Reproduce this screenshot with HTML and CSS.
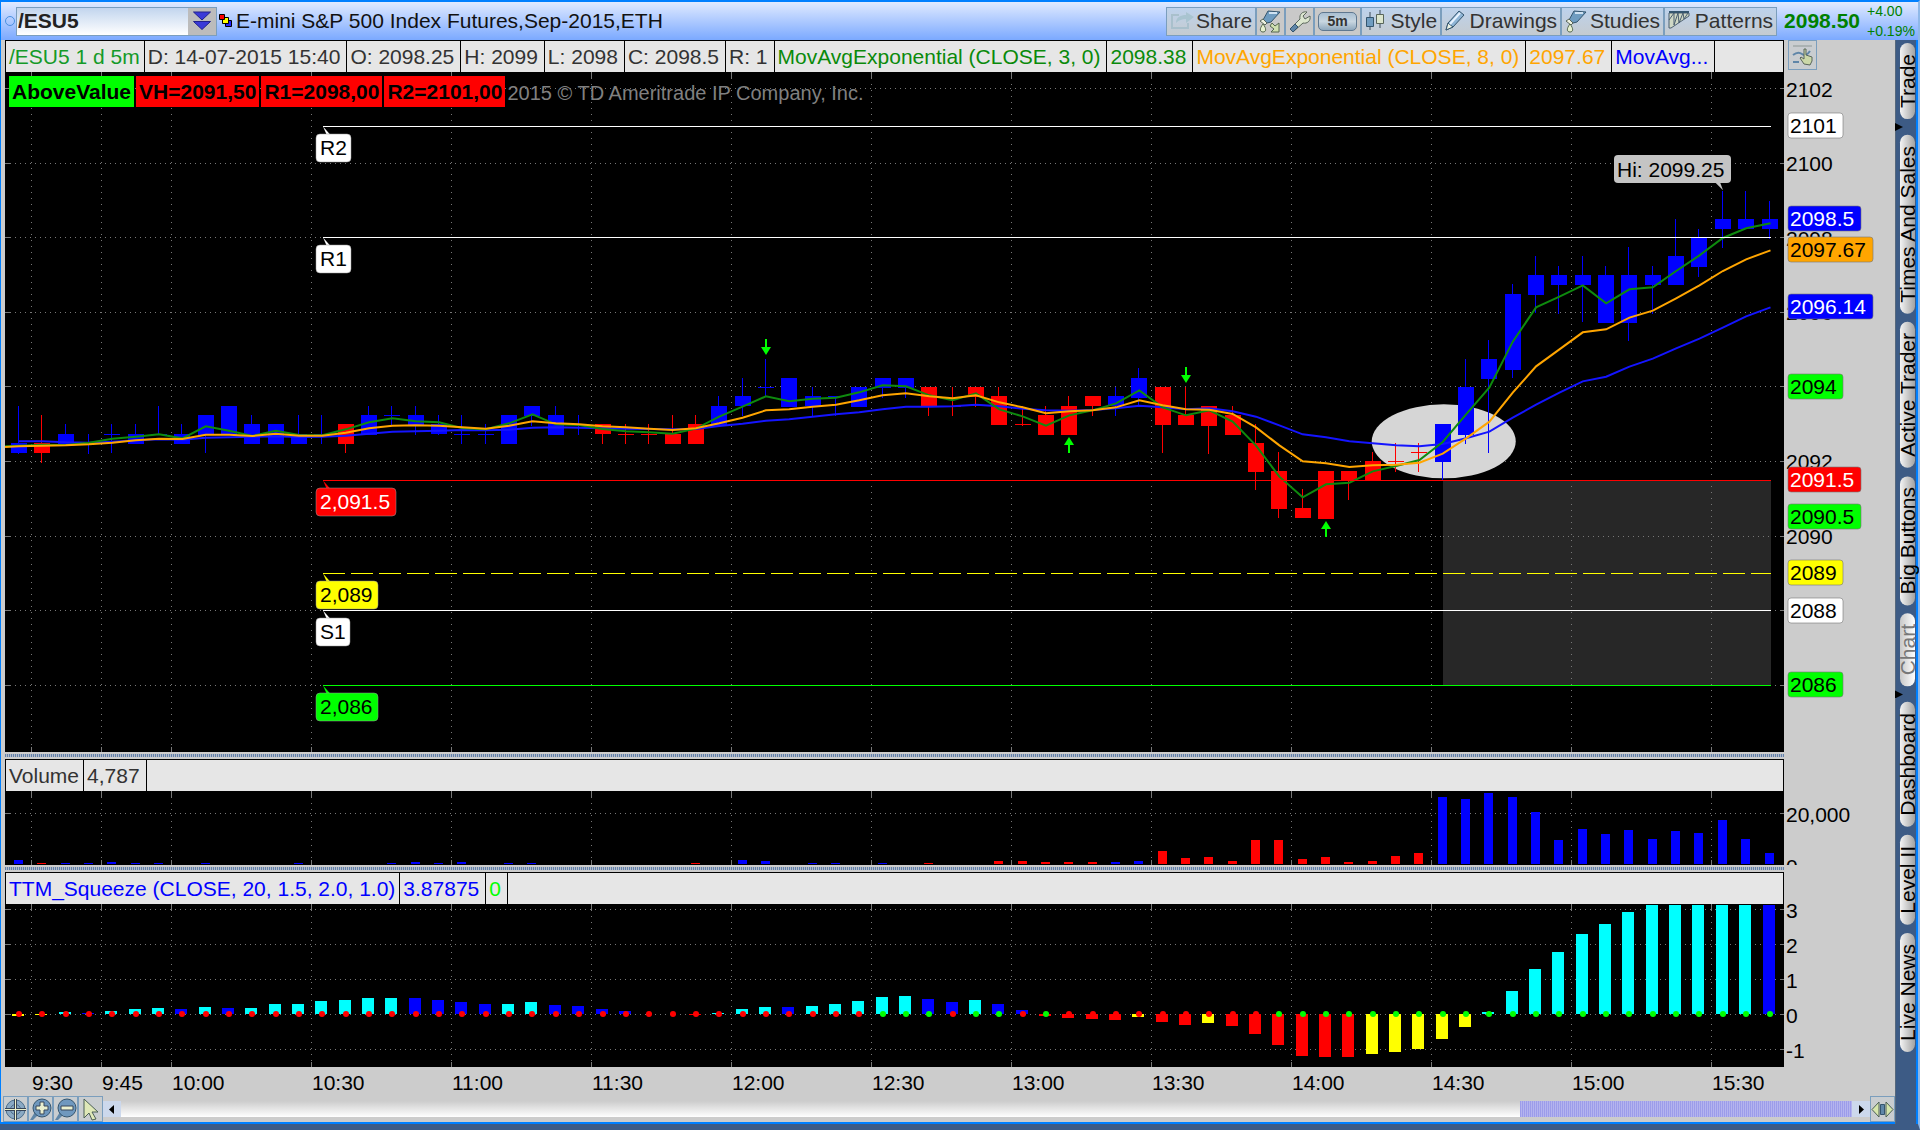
FILE: index.html
```html
<!DOCTYPE html>
<html lang="en">
<head>
<meta charset="utf-8">
<title>/ESU5 Chart</title>
<link rel="stylesheet" href="styles.css">
</head>
<body>
<div class="window">
  <header class="titlebar">
    <span class="link-dot"></span>
    <div class="symbol">
      <input class="symbol-input" type="text" value="/ESU5" aria-label="Symbol">
      <button class="symbol-drop" type="button" aria-label="Choose symbol">
        <svg width="18" height="20" viewBox="0 0 18 20"><path d="M0.500 1h17l-8.500 8zM0.500 10.500h17l-8.500 8z" fill="#3a3ad8" stroke="#22228c"/></svg>
      </button>
    </div>
    <svg class="squares" width="14" height="14" viewBox="0 0 14 14"><g stroke="#000"><path d="M6.500 6.500h6v6h-6z" fill="#22f"/><path d="M3.500 3.500h6v6h-6z" fill="#ff0"/><path d="M0.500 0.500h5v5h-5z" fill="#f00"/></g></svg>
    <h1 class="title">E-mini S&amp;P 500 Index Futures,Sep-2015,ETH</h1>
    <nav class="tools">
      <button class="tool tool-share" type="button"><svg width="25" height="20" viewBox="0 0 25 20"><path d="M9 4H2v13h16v-5" fill="none" stroke="#a9c0cc" stroke-width="2"/><path d="M6 12c0-6 5-8 10-8V1l8 5-8 6V8c-4 0-7 1-10 4z" fill="#a9c4d0"/></svg>Share</button>
      <button class="tool tool-icon" type="button" aria-label="Edit studies"><svg width="25" height="25" viewBox="0 0 25 25"><path d="M10 2l12 1-9 10-4 1-4-3z" fill="#6f9cc0" stroke="#34556e"/><path d="M11 4l8 0" stroke="#cfe2f2" stroke-width="2"/><path d="M5 10l4 4-2 2-5-4z" fill="#eef1e0" stroke="#59665a"/><path d="M5 15c4 5 3 8 0 8s-4-3 0-8z" fill="#e7f0cf" stroke="#54664e"/><path d="M14 14l3 3 4-3v9h-8l3-3-4-3z" fill="#cfe0b0" stroke="#54664e"/></svg></button>
      <button class="tool tool-icon" type="button" aria-label="Settings"><svg width="25" height="25" viewBox="0 0 25 25"><path d="M3 20L13 10c-1-5 3-8 7-7l-4 4 2 3 5-3c1 5-3 8-7 7L6 23z" fill="#dce6cf" stroke="#59665a"/><path d="M3 20l5-5 3 3-5 5z" fill="#5f86a8" stroke="#34556e"/></svg></button>
      <button class="tool tool-period" type="button"><span class="period">5m</span></button>
      <button class="tool tool-style" type="button"><svg width="20" height="22" viewBox="0 0 20 22"><path d="M5 2v18M15 0v18" stroke="#3d4d5a"/><path d="M1.500 7.500h7v9h-7z" fill="#6f9cc0" stroke="#34556e"/><path d="M11.500 4.500h7v9h-7z" fill="#dce6cf" stroke="#59665a"/></svg>Style</button>
      <button class="tool tool-draw" type="button"><svg width="20" height="22" viewBox="0 0 20 22"><path d="M1 20l2-7L14 1l5 4L8 17z" fill="#8fb5d6" stroke="#34556e"/><path d="M1 20l2-7 5 4z" fill="#eef3e4" stroke="#34556e"/><path d="M5 14L15 3" stroke="#e8f3ff" stroke-width="2"/></svg>Drawings</button>
      <button class="tool tool-studies" type="button"><svg width="22" height="25" viewBox="0 0 22 25"><path d="M9 2l12 1-9 10-4 1-4-3z" fill="#6f9cc0" stroke="#34556e"/><path d="M10 4l8 0" stroke="#cfe2f2" stroke-width="2"/><path d="M4 10l4 4-2 2-5-4z" fill="#eef1e0" stroke="#59665a"/><path d="M5 15c4 5 3 8 0 8s-4-3 0-8z" fill="#e7f0cf" stroke="#54664e"/></svg>Studies</button>
      <button class="tool tool-patterns" type="button"><svg width="22" height="22" viewBox="0 0 22 22"><path d="M1 3h20v3L3 18H1z" fill="#cfd8c6" stroke="#4b5f70"/><path d="M1 10l5-7 0 12 4-12 1 10 4-10 1 6 4-6" fill="none" stroke="#4b5f70"/><path d="M1 2h20" stroke="#34556e" stroke-width="2"/></svg>Patterns</button>
    </nav>
    <strong class="last">2098.50</strong>
    <div class="change"><span>+4.00</span><span>+0.19%</span></div>
  </header>

  <div class="middle">
    <main class="charts">
      <section class="panel panel-price">
        <div class="legend">
          <span class="cell green">/ESU5 1 d 5m</span><span class="cell">D: 14-07-2015 15:40</span><span class="cell">O: 2098.25</span><span class="cell">H: 2099</span><span class="cell">L: 2098</span><span class="cell">C: 2098.5</span><span class="cell">R: 1</span><span class="cell ema">MovAvgExponential (CLOSE, 3, 0)</span><span class="cell ema">2098.38</span><span class="cell orange">MovAvgExponential (CLOSE, 8, 0)</span><span class="cell orange">2097.67</span><span class="cell blue">MovAvg...</span>
        </div>
        <button class="pan" type="button" aria-label="Pan axis"><svg width="24" height="24" viewBox="0 0 24 24"><path d="M2 3h19" stroke="#8d9896"/><path d="M2 12q5-4 9-1t8-3M2 19l6 0" stroke="#5f86a8" fill="none" stroke-width="2"/><path d="M13 21l-4-6 1-1 3 2V6h2v6l6 2v4l-2 4z" fill="#cbd8a8" stroke="#59665a"/></svg></button>
        <div class="plot-wrap">
          <svg class="plot" id="price"></svg>
          <div class="badges">
            <span class="badge badge-up">AboveValue</span><span class="badge">VH=2091,50</span><span class="badge">R1=2098,00</span><span class="badge">R2=2101,00</span><span class="copyright">2015 © TD Ameritrade IP Company, Inc.</span>
          </div>
        </div>
      </section>
      <div class="splitter"></div>
      <section class="panel panel-volume">
        <div class="legend"><span class="cell">Volume</span><span class="cell">4,787</span></div>
        <div class="plot-wrap"><svg class="plot" id="volume"></svg></div>
      </section>
      <div class="splitter"></div>
      <section class="panel panel-squeeze">
        <div class="legend"><span class="cell blue">TTM_Squeeze (CLOSE, 20, 1.5, 2.0, 1.0)</span><span class="cell blue">3.87875</span><span class="cell lime">0</span></div>
        <div class="plot-wrap"><svg class="plot" id="squeeze"></svg></div>
      </section>
      <svg class="times" id="times"></svg>
      <footer class="bottom">
        <button class="mini" type="button" aria-label="Crosshair"><svg width="23" height="23" viewBox="0 0 23 23"><circle cx="11.500" cy="11.500" r="9.500" fill="#8aa9c4" stroke="#4d6f8c"/><circle cx="11.500" cy="11.500" r="5" fill="none" stroke="#4d6f8c"/><path d="M11.500 1v21M1 11.500h21" stroke="#38465a" stroke-width="3"/><path d="M11.500 1v21M1 11.500h21" stroke="#eef3cc"/></svg></button>
        <button class="mini" type="button" aria-label="Zoom in"><svg width="23" height="23" viewBox="0 0 23 23"><path d="M1 22l5-8 3 3-5 5z" fill="#5f86a8"/><circle cx="13" cy="10" r="9" fill="#6f98be" stroke="#34556e"/><path d="M11 4h4v4h4v4h-4v4h-4v-4H7V8h4z" fill="#eaf0cf" stroke="#38465a"/></svg></button>
        <button class="mini" type="button" aria-label="Zoom out"><svg width="23" height="23" viewBox="0 0 23 23"><path d="M1 22l5-8 3 3-5 5z" fill="#5f86a8"/><circle cx="13" cy="10" r="9" fill="#6f98be" stroke="#34556e"/><path d="M7 8h12v4H7z" fill="#eaf0cf" stroke="#38465a"/></svg></button>
        <button class="mini" type="button" aria-label="Pointer"><svg width="23" height="23" viewBox="0 0 23 23"><path d="M5 1l14 13h-6l4 7-4 1-3-7-5 5z" fill="#dfe8b8" stroke="#4b5f55"/></svg></button>
        <button class="step" type="button" aria-label="Scroll left"><svg width="6" height="9" viewBox="0 0 6 9"><path d="M5 0v9L0 4.500z"/></svg></button>
        <div class="track"><div class="thumb"></div></div>
        <button class="step" type="button" aria-label="Scroll right"><svg width="6" height="9" viewBox="0 0 6 9"><path d="M1 0v9l5-4.500z"/></svg></button>
        <button class="mini" type="button" aria-label="Fit width"><svg width="23" height="23" viewBox="0 0 23 23"><path d="M8 4v15l-7-7.500zM15 4v15l7-7.500z" fill="#d6e6ac" stroke="#4b5f55"/><path d="M9.500 6.500h4v10h-4z" fill="#5f86a8" stroke="#34556e"/></svg></button>
      </footer>
    </main>
    <aside class="tabs">
      <button class="tab" type="button">Trade</button>
      <i class="marker"></i>
      <button class="tab" type="button">Times And Sales</button>
      <button class="tab" type="button">Active Trader</button>
      <button class="tab" type="button">Big Buttons</button>
      <button class="tab tab-current" type="button">Chart</button>
      <i class="marker"></i>
      <button class="tab" type="button">Dashboard</button>
      <button class="tab" type="button">Level II</button>
      <button class="tab" type="button">Live News</button>
    </aside>
  </div>
</div>
<script src="chart.js"></script>
</body>
</html>
```
FILE: styles.css
```css
* { box-sizing: border-box; }

body {
  margin: 0;
  background: #3d5b85;
  font-family: "Liberation Sans", Arial, sans-serif;
  font-size: 21px;
  line-height: 24px;
  color: #333;
}

button {
  font: inherit;
  color: inherit;
  margin: 0;
  padding: 0;
}

.window {
  display: flex;
  flex-direction: column;
  min-height: 100vh;
  background: #ccc;
  border-top: 2px solid #0080ff;
  border-bottom: 6px solid #3d5b85;
  border-right: 2px solid #8fb8e8;
}

/* Title bar */
.titlebar {
  display: flex;
  align-items: center;
  height: 38px;
  padding: 0 3px 0 4px;
  background: linear-gradient(#e0eaff, #7ba9ff);
  border-left: 1px solid #0080ff;
}

.link-dot {
  width: 10px;
  height: 10px;
  margin-right: 1px;
  border: 1px solid #4a90e0;
  border-radius: 50%;
}

.symbol {
  display: flex;
  width: 201px;
  height: 29px;
  border: 1px solid #7b9ebd;
}

.symbol-input {
  flex: 1;
  min-width: 0;
  padding: 0 1px;
  border: 0;
  background: linear-gradient(#c2d5ee, #fff);
  font: bold 21px/24px "Liberation Sans", Arial, sans-serif;
  color: #222;
}

.symbol-drop {
  display: flex;
  align-items: center;
  justify-content: center;
  width: 28px;
  border: 0;
  background: #bcbcbc;
}

.squares { margin: 0 3px 0 2px; }

.title {
  margin: 0;
  font-size: 21px;
  font-weight: normal;
  color: #111;
  white-space: nowrap;
}

.tools {
  display: flex;
  margin-left: auto;
}

.tool {
  display: flex;
  align-items: center;
  justify-content: space-between;
  height: 29px;
  padding: 0 3px 0 3px;
  border: 1px solid #7b9ebd;
  background: linear-gradient(#bdd2ec, #c5cbd0);
}

.tool-share { width: 90px; }
.tool-icon { width: 29px; padding: 0 1px; background: #c9c9c9; }
.tool-period { width: 47px; padding: 0 3px; background: #c9c9c9; }
.tool-style { width: 80px; }
.tool-draw { width: 120px; }
.tool-studies { width: 103px; }
.tool-patterns { width: 113px; }

.period {
  width: 100%;
  border: 1px solid #5f7890;
  border-radius: 5px;
  background: linear-gradient(#a9bfd2, #c8d6e0 50%, #8ea7bc);
  font-size: 14px;
  font-weight: bold;
  line-height: 17px;
  text-align: center;
}

.last {
  margin-left: 7px;
  color: #008000;
}

.change {
  display: flex;
  flex-direction: column;
  justify-content: space-between;
  width: 48px;
  height: 36px;
  margin-left: 7px;
  font-size: 14px;
  line-height: 16px;
  color: #008000;
}

/* Body */
.middle {
  display: flex;
  flex: 1;
}

.charts {
  display: flex;
  flex: 1;
  flex-direction: column;
  min-width: 0;
  padding-left: 4px;
  border-left: 1px solid #0080ff;
  border-bottom: 2px solid #0080ff;
}

.panel {
  display: grid;
  grid-template-columns: 1fr 111px;
  grid-template-rows: 32px 1fr;
}

.panel-price { flex: 1; min-height: 500px; }
.panel-volume { height: 106px; }
.panel-squeeze { height: 195px; }

.legend {
  display: flex;
  overflow: hidden;
  background: #e6e6e6;
  border: 1px solid #000;
  border-bottom: 0;
}

.cell {
  flex: none;
  padding: 4px 6px 3px 3px;
  border-right: 1px solid #000;
  white-space: nowrap;
}

.cell:first-child { padding-right: 4px; }

.green { color: #149a28; }
.ema { color: #0a8a0a; }
.orange { color: #ffa500; }
.blue { color: #00f; }
.lime { color: #0f0; }

.pan {
  display: flex;
  align-items: center;
  justify-content: center;
  width: 29px;
  height: 30px;
  margin-left: 4px;
  border: 1px solid #7b9ebd;
  background: #c9cdd0;
}

.plot-wrap {
  position: relative;
  grid-column: 1 / -1;
  min-height: 0;
}

.plot {
  position: absolute;
  width: 100%;
  height: 100%;
}

.badges {
  position: absolute;
  top: 4px;
  left: 4px;
  display: flex;
  gap: 2px;
}

.badge {
  padding: 4px 3px 3px;
  background: #f00;
  color: #000;
  font-weight: bold;
}

.badge-up { background: #0f0; }

.copyright {
  padding: 5px 0 2px;
  font-size: 20px;
  color: #808080;
}

.splitter {
  height: 7px;
  margin-right: 111px;
  border: solid #ccc;
  border-width: 2px 0;
  background: repeating-linear-gradient(90deg, #6180ab 0 1px, #b4bcc8 1px 2px);
}

.times {
  width: 100%;
  height: 29px;
}

svg text {
  font-family: "Liberation Sans", Arial, sans-serif;
  font-size: 21px;
}

/* Scroll bar row */
.bottom {
  display: flex;
  align-items: center;
  height: 26px;
  margin-left: -2px;
}

.mini {
  display: flex;
  flex: none;
  align-items: center;
  justify-content: center;
  width: 25px;
  height: 26px;
  border: 1px solid #7b9ebd;
  background: #c9cdd0;
}

.step {
  display: flex;
  align-items: center;
  justify-content: center;
  width: 18px;
  height: 16px;
  border: 0;
  background: #ccd8ec;
}

.track {
  display: flex;
  flex: 1;
  justify-content: flex-end;
  height: 16px;
  background: linear-gradient(#ccc, #fff);
}

.thumb {
  width: 19.2%;
  background: repeating-linear-gradient(90deg, #9c9cea 0 1px, #b4b4ee 1px 2px);
}

/* Side tabs */
.tabs {
  display: flex;
  flex-direction: column;
  gap: 8px;
  width: 23px;
  padding: 3px 2px 0 4px;
  background: #3d5b85;
  border-left: 1px solid #56687c;
  border-right: 2px solid #0080ff;
}

.tab {
  width: 15px;
  padding: 11px 0;
  border: 0;
  border-radius: 8px;
  background: linear-gradient(90deg, #a2a2a2, #f4f4f4);
  color: #000;
  line-height: 15px;
  writing-mode: vertical-rl;
  transform: rotate(180deg);
  white-space: nowrap;
}

.tab-current {
  background: linear-gradient(90deg, #fff, #c8c8c8);
  color: #777;
}

.marker {
  height: 8px;
  width: 8px;
  margin: -4px 0 -4px -5px;
  background: #000;
  clip-path: polygon(0 0, 100% 50%, 0 100%);
}
```
FILE: chart.js
```js
const AXIS = 111;
const COLORS = { b: '#00f', r: '#f00', c: '#0ff', y: '#ff0', g: '#0f0' };

// Five-minute candles from 9:25: colour, body top, body bottom, high, low (over 2000)
const candles = `b 92.5 92.25 93.5 92.25|r 92.5 92.25 93.25 92|b 92.75 92.5 93 92.5|b 92.5 92.5 92.75 92.25
b 92.75 92.75 93 92.25|b 92.75 92.5 93 92.5|b 92.75 92.75 93.5 92.75|b 92.75 92.5 93 92.5|b 93.25 92.75 93.25 92.25
b 93.5 92.75 93.5 92.75|b 93 92.5 93.25 92.5|b 93 92.5 93 92.5|b 92.75 92.5 93.25 92.5|b 92.75 92.75 93.25 92.5
r 93 92.5 93 92.25|b 93.25 92.75 93.5 92.75|b 93.25 93.25 93.5 93|b 93.25 93 93.5 92.75|b 93 92.75 93.25 92.75
b 92.75 92.75 93.25 92.5|b 92.75 92.75 93 92.5|b 93.25 92.5 93.25 92.5|b 93.5 93.25 93.5 93|b 93.25 92.75 93.5 92.75
b 93 93 93.25 92.75|r 93 92.75 93 92.5|r 92.75 92.75 93 92.5|r 92.75 92.75 93 92.5|r 92.75 92.5 93.25 92.5
r 93 92.5 93.25 92.5|b 93.5 93 93.75 93|b 93.75 93.5 94.25 93.25|b 94 94 94.75 93.75|b 94.25 93.5 94.25 93.5
b 93.75 93.5 94 93.25|b 93.75 93.75 93.75 93.25|b 94 93.5 94 93.5|b 94.25 94 94.25 93.75|b 94.25 94 94.25 93.75
r 94 93.5 94 93.25|r 93.5 93.5 94 93.25|r 94 93.75 94 93.5|r 93.75 93 94 93|r 93 93 93.5 93
r 93.25 92.75 93.5 92.75|r 93.5 92.75 93.75 92.75|r 93.75 93.5 93.75 93.25|b 93.75 93.5 94 93.25|b 94.25 93.75 94.5 93.5
r 94 93 94 92.25|r 93.25 93 94 93|r 93.5 93 93.5 92.25|r 93.25 92.75 93.5 92.75|r 92.5 91.75 93 91.25
r 91.75 90.75 92.25 90.5|r 90.75 90.5 91.25 90.5|r 91.75 90.5 91.75 90.5|r 91.75 91.5 91.75 91|r 92 91.5 92.25 91.5
r 92 92 92.5 91.75|r 92.25 92.25 92.5 91.75|b 93 92 93 91.5|b 94 92.75 94.75 92.5|b 94.75 94.25 95.25 92.25
b 96.5 94.5 96.75 94.25|b 97 96.5 97.5 96|b 97 96.75 97.25 96|b 97 96.75 97.5 95.75|b 97 95.75 97.25 95.75
b 97 95.75 97.75 95.25|b 97 96.75 97.25 96|b 97.5 96.75 98.5 96.75|b 98 97.25 98.25 97|b 98.5 98.25 99.25 97.75
b 98.5 98.25 99.25 98.25|b 98.5 98.25 99 98`.split(/[|\n]/).map(row => {
  const [color, ...v] = row.split(' ');
  return [color, ...v.map(n => 2000 + Number(n))];
});

// Moving averages, in thirds of a chart unit; the quiet morning is stored from a lower base
const morning = list => list.map(v => v + 774);
const afternoon = list => list.map(v => v + 264);
const averages = [
  ['#1414ff', morning([334,334,337,338,335,331,328,329,323,322,320,319,321,320,317,311,305,304,302,300,301,299,293,292,293,295,296,297,298,297,288,281,272,268,260,253,247,238,230,230,229,224,229,236,241,242,240,235,227,232,238,235,244])
    .concat(afternoon([770,796,823,832,844,850,856,859,852,835,815,773,734,698,664,650,620,596,565,536,503,469,442]))],
  ['#0e8a0e', morning([347,344,345,338,326,320,313,325,289,302,318,302,315,316,298,277,265,274,277,295,298,280,253,283,285,297,304,307,311,296,260,230,199,214,206,203,187,166,169,196,211,190,238,259,287,256,241,220,181,232,256,241,275])
    .concat(afternoon([857,950,1012,973,968,934,918,900,846,763,682,545,442,410,376,430,388,382,333,286,234,205,190]))],
  ['#ffa500', morning([349,347,346,343,338,331,326,327,314,314,318,311,317,317,308,295,287,286,287,292,296,287,274,280,283,289,292,296,300,295,280,263,241,238,230,224,211,196,190,199,205,196,217,232,250,244,241,232,211,226,238,239,252])
    .concat(afternoon([802,856,904,910,921,916,914,908,881,835,785,698,619,568,517,508,473,452,415,376,333,298,271]))],
];

const volume = { 0:'b4',1:'r1',2:'b1',3:'b1',4:'b2',5:'b1',6:'b1',8:'b1',12:'b1',16:'b1',17:'b2',18:'b1',19:'b2',21:'b1',22:'b1',29:'r1',31:'b4',32:'b3',34:'b1',35:'b1',37:'b1',39:'r1',
  42:'r3',43:'r3',44:'r2',45:'r2',46:'r2',47:'b2',48:'b3',49:'r13',50:'r6',51:'r7',52:'r3',53:'r24',54:'r24',55:'r5',56:'r7',57:'r2',58:'r3',59:'r8',60:'r11',
  61:'b67',62:'b65',63:'b71',64:'b67',65:'b52',66:'b24',67:'b35',68:'b30',69:'b34',70:'b25',71:'b33',72:'b31',73:'b44',74:'b25',75:'b11' };

const squeeze = 'y-2 y-1 c2 b1 c3 c5 c6 b5 c7 b6 c6 c10 c10 c13 c14 c16 c16 b16 b14 b12 b10 c10 c12 b9 b8 b5 b3 b0 b0 r-1 c1 c5 c7 b7 c8 c10 c13 c17 c18 b15 b12 c14 b10 b4 r-2 r-4 r-5 r-6 y-3 r-8 r-11 y-9 r-12 r-20 r-31 r-42 r-43 r-43 y-40 y-38 y-35 y-25 y-13 c2 c23 c45 c62 c80 c90 c102 c109 c109 c109 c109 c109 b109'.split(' ');
const greenDots = i => [37, 38, 39, 41, 42, 44].includes(i) || i > 53;

const times = [[1, '9:30'], [4, '9:45']];
for (let i = 7, t = 600; i < 76; i += 6, t += 30) {
  times.push([i, Math.floor(t / 60) + ':' + String(t % 60).padStart(2, '0')]);
}

const rect = (x, y, w, h, fill, extra = '') =>
  `<rect x="${Math.round(x)}" y="${Math.round(y)}" width="${Math.round(w)}" height="${Math.round(h)}" fill="${fill}" ${extra}/>`;
const text = (x, y, s, fill = '#000') => `<text x="${Math.round(x)}" y="${Math.round(y)}" fill="${fill}">${s}</text>`;
const line = (x1, y1, x2, y2, color, dash = 'none') =>
  `<line x1="${x1}" y1="${y1}" x2="${x2}" y2="${y2}" stroke="${color}" stroke-dasharray="${dash}" shape-rendering="crispEdges"/>`;

function scaleX(width) {
  const step = (width - 28.5) / 75;
  return { bar: i => 14 + i * step, time: i => Math.round(3 + i * step - 0.5) + 0.5 };
}

function grid(w, h, x, levels) {
  let out = rect(0, 0, w, h, '#000');
  for (const [i] of times) {
    const tx = x.time(i);
    out += line(tx, 0, tx, h, '#777', '1 5') + line(tx, 1, tx, 6, '#777') + line(tx, h - 5, tx, h, '#777');
  }
  for (const y of levels) {
    const ly = Math.floor(y) + 0.5;
    out += line(0, ly, w, ly, '#777', '1 4') + line(0, ly, 5, ly, '#777') + line(w - 4, ly, w, ly, '#777');
  }
  return out;
}

function drawPrice(svg) {
  const w = svg.clientWidth - AXIS, h = svg.clientHeight, k = h / 680;
  const x = scaleX(w);
  const y = p => (91.3 + (2100 - p) * 37.27) * k;
  const right = Math.round(x.bar(75)) + 1;
  let out = grid(w, h, x, [2102, 2100, 2098, 2096, 2094, 2092, 2090, 2088, 2086].map(y));

  out += `<ellipse cx="${x.bar(61) + 1}" cy="${y(2092.54)}" rx="72" ry="37" fill="#d6d6d6"/>`;
  out += rect(x.bar(61), y(2091.5), right - x.bar(61), y(2086) - y(2091.5), '#272727');
  for (const [i] of times) {
    if (x.time(i) > x.bar(61)) out += line(x.time(i), y(2091.5), x.time(i), y(2086), '#777', '1 5');
  }
  for (const p of [2090, 2088]) {
    out += line(x.bar(61), Math.floor(y(p)) + 0.5, right, Math.floor(y(p)) + 0.5, '#777', '1 4');
  }

  candles.forEach(([color, top, bottom, high, low], i) => {
    const cx = Math.round(x.bar(i)), fill = COLORS[color];
    out += rect(cx - 1, y(high), 1, y(low) - y(high) + 1, fill);
    out += rect(cx - 8, y(top), 16, top === bottom ? 1 : y(bottom) - y(top) + 1, fill);
  });
  for (const [color, list] of averages) {
    const start = color === '#1414ff' ? [] : [`0,${(list[0] + 2) / 3 * k}`];
    const pts = start.concat(list.map((v, i) => `${x.bar(i) + (i > 74 ? 1 : 0)},${v / 3 * k}`));
    out += `<polyline points="${pts.join(' ')}" fill="none" stroke="${color}" stroke-width="2"/>`;
  }

  const levels = [
    [2101, '#fff', '#000', 'R2', 35], [2098, '#fff', '#000', 'R1', 35], [2091.5, '#f00', '#fff', '2,091.5', 80],
    [2089, '#ff0', '#000', '2,089', 62], [2088, '#fff', '#000', 'S1', 34], [2086, '#0f0', '#000', '2,086', 62],
  ];
  for (const [p, fill, ink, label, width] of levels) {
    const ly = Math.floor(y(p)) + 0.5, lx = Math.round(x.bar(13)) + 1;
    out += line(lx, ly, right, ly, fill, p === 2089 ? '22 6' : 'none');
    out += `<path d="M${lx} ${ly}l4 9h4z" fill="${fill}"/>`;
    out += rect(lx - 7, ly + 7.5, width, 28, fill, 'rx="4" stroke="#999" stroke-opacity="0.5"');
    out += text(lx - 3, ly + 28.5, label, ink);
  }

  const arrow = (i, ty, dir) => {
    const ax = Math.round(x.bar(i)), yy = Math.round(ty * k);
    return `<path d="M${ax} ${yy}l5 ${8 * dir}h-4v${8 * dir}h-2v${-8 * dir}h-4z" fill="#0f0"/>`;
  };
  out += arrow(32, 283, -1) + arrow(50, 311, -1) + arrow(45, 365, 1) + arrow(56, 449, 1);

  const hx = Math.round(x.bar(73)), hy = y(2099.25);
  out += `<path d="M${hx} ${hy - 1}l-8 -8h5z" fill="#c4c4c4"/>`;
  out += rect(hx - 109, hy - 36, 117, 28, '#c4c4c4', 'rx="4"') + text(hx - 106, hy - 14, 'Hi: 2099.25');

  for (const p of [2102, 2100, 2098, 2096, 2092, 2090]) out += text(w + 2, y(p) + 8, p);
  const tags = [
    [2101, '#fff', '#000'], [2098.5, '#00f', '#fff'], [2097.67, '#ffa500', '#000'], [2096.14, '#00f', '#fff'],
    [2094, '#0f0', '#000'], [2091.5, '#f00', '#fff'], [2090.5, '#0f0', '#000'], [2089, '#ff0', '#000'],
    [2088, '#fff', '#000'], [2086, '#0f0', '#000'],
  ];
  for (const [p, fill, ink] of tags) {
    const width = { 4: 55, 6: 73, 7: 85 }[String(p).length];
    out += rect(w + 4, y(p) - 13, width, 25, fill, 'rx="3" stroke="#777" stroke-opacity="0.6"');
    out += text(w + 6, y(p) + 7, p, ink);
  }
  svg.innerHTML = out;
}

function drawVolume(svg) {
  const w = svg.clientWidth - AXIS, h = svg.clientHeight, x = scaleX(w);
  let out = grid(w, h, x, [h - 52]);
  for (const i in volume) {
    const v = Number(volume[i].slice(1));
    out += rect(x.bar(i) - 5, h - 1 - v, 9, v, COLORS[volume[i][0]]);
  }
  svg.innerHTML = out + text(w + 2, h - 43, '20,000') + text(w + 2, h + 9, '0');
}

function drawSqueeze(svg) {
  const w = svg.clientWidth - AXIS, h = svg.clientHeight, x = scaleX(w), zero = 110;
  let out = grid(w, h, x, [5, 40, 75, 110, 145]);
  squeeze.forEach((s, i) => {
    const v = Number(s.slice(1));
    out += rect(x.bar(i) - 7, v > 0 ? zero - v : zero, 12, Math.abs(v), COLORS[s[0]]);
  });
  squeeze.forEach((s, i) => {
    out += `<circle cx="${Math.round(x.bar(i))}" cy="${zero}" r="3" fill="${COLORS[greenDots(i) ? 'g' : 'r']}"/>`;
  });
  [3, 2, 1, 0, -1].forEach((n, i) => { out += text(w + 2, 14 + i * 35, n); });
  svg.innerHTML = out;
}

function drawTimes(svg) {
  const x = scaleX(svg.clientWidth - AXIS);
  svg.innerHTML = times.map(([i, label]) => text(x.time(i), 23, label)).join('');
}

function draw() {
  drawPrice(document.getElementById('price'));
  drawVolume(document.getElementById('volume'));
  drawSqueeze(document.getElementById('squeeze'));
  drawTimes(document.getElementById('times'));
}

window.addEventListener('resize', draw);
draw();
```
